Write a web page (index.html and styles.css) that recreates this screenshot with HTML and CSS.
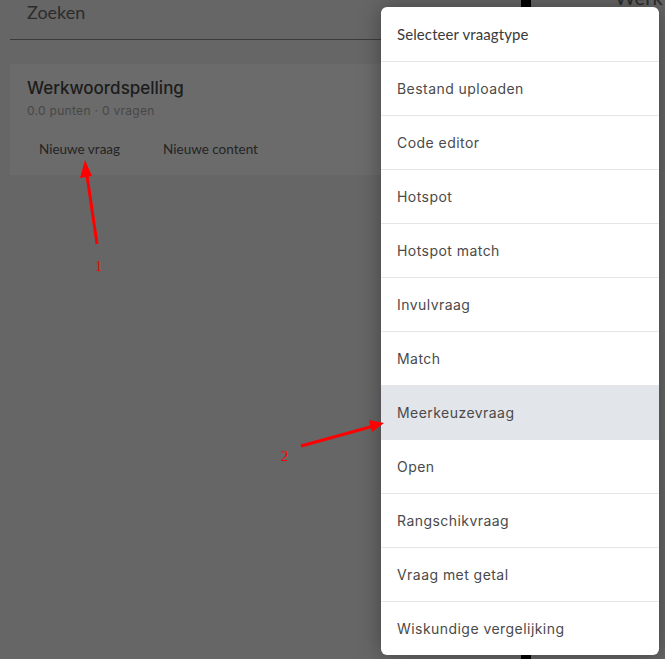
FILE: index.html
```html
<!DOCTYPE html>
<html lang="nl">
<head>
<meta charset="utf-8">
<title>Vraagtype selecteren</title>
<link rel="stylesheet" href="styles.css">
</head>
<body>
<div class="app">
  <main class="left">
    <div class="search">Zoeken</div>
    <section class="card">
      <h2 class="card-title">Werkwoordspelling</h2>
      <p class="card-meta">0.0 punten · 0 vragen</p>
      <div class="card-actions">
        <span class="action">Nieuwe vraag</span>
        <span class="action">Nieuwe content</span>
      </div>
    </section>
  </main>
  <div class="divider"></div>
  <aside class="right">
    <div class="right-title">Werk</div>
  </aside>
</div>

<ul class="menu">
  <li class="menu-head">Selecteer vraagtype</li>
  <li class="menu-item">Bestand uploaden</li>
  <li class="menu-item">Code editor</li>
  <li class="menu-item">Hotspot</li>
  <li class="menu-item">Hotspot match</li>
  <li class="menu-item">Invulvraag</li>
  <li class="menu-item">Match</li>
  <li class="menu-item active">Meerkeuzevraag</li>
  <li class="menu-item">Open</li>
  <li class="menu-item">Rangschikvraag</li>
  <li class="menu-item">Vraag met getal</li>
  <li class="menu-item">Wiskundige vergelijking</li>
</ul>

<svg class="annot" width="665" height="659" viewBox="0 0 665 659">
  <line x1="97" y1="244" x2="86.5" y2="172" stroke="#ff0000" stroke-width="3"/>
  <polygon points="85,160 80,178 92,176" fill="#ff0000"/>
  <text x="95" y="271" fill="#ff0000" font-family="Liberation Serif, serif" font-size="15">1</text>
  <line x1="301" y1="446" x2="372" y2="426.5" stroke="#ff0000" stroke-width="3"/>
  <polygon points="384,423 369,420 372,432" fill="#ff0000"/>
  <text x="281" y="461" fill="#ff0000" font-family="Liberation Serif, serif" font-size="15">2</text>
</svg>
</body>
</html>
```

FILE: styles.css
```css
* { box-sizing: border-box; }
html, body { margin: 0; padding: 0; }
body {
  width: 665px;
  height: 659px;
  overflow: hidden;
  background: #666666;
  font-family: "Inter", "Open Sans", sans-serif;
  position: relative;
}
.app {
  display: grid;
  grid-template-columns: 521px 10px 1fr;
  height: 659px;
}
.left {
  padding: 0 0 0 10px;
}
.search {
  height: 40px;
  padding: 1px 0 0 17px;
  border-bottom: 1px solid #3b3b3b;
  font-family: "Lato", sans-serif;
  font-size: 18px;
  line-height: 22px;
  color: #2c2c2c;
}
.card {
  margin-top: 24px;
  background: #6b6b6b;
  height: 111px;
  padding: 14px 17px 0;
}
.card-title {
  margin: 0;
  font-family: "Inter", sans-serif;
  font-weight: 500;
  font-size: 17px;
  line-height: 20px;
  color: #1c1c1c;
}
.card-meta {
  margin: 6px 0 0;
  font-size: 12px;
  line-height: 14px;
  letter-spacing: 0.3px;
  color: #474747;
}
.card-actions {
  display: flex;
  gap: 43px;
  padding: 23px 0 0 12px;
}
.action {
  font-family: "Lato", sans-serif;
  font-size: 13.5px;
  color: #242424;
}
.divider { background: #000; }
.right {
  padding-left: 84px;
  overflow: hidden;
}
.right-title {
  margin-top: -15px;
  font-family: "Lato", sans-serif;
  font-size: 20px;
  color: #2c2c2c;
  white-space: nowrap;
}
.menu {
  position: absolute;
  left: 381px;
  top: 7px;
  width: 278px;
  margin: 0;
  padding: 0;
  list-style: none;
  background: #ffffff;
  border-radius: 6px;
  overflow: hidden;
  box-shadow: 0 0 22px rgba(0, 0, 0, 0.35);
}
.menu li {
  height: 54px;
  display: flex;
  align-items: center;
  padding-left: 16px;
  border-top: 1px solid #e4e6ea;
  color: #4a4a4a;
  font-size: 14px;
  letter-spacing: 0.45px;
}
.menu li:first-child { border-top: none; }
.menu-head {
  font-family: "Lato", sans-serif;
  font-size: 15px !important;
  letter-spacing: 0.1px !important;
  color: #3a3a3a !important;
}
.menu-item.active { background: #e2e5e9; }
.annot {
  position: absolute;
  left: 0;
  top: 0;
  pointer-events: none;
}
```
